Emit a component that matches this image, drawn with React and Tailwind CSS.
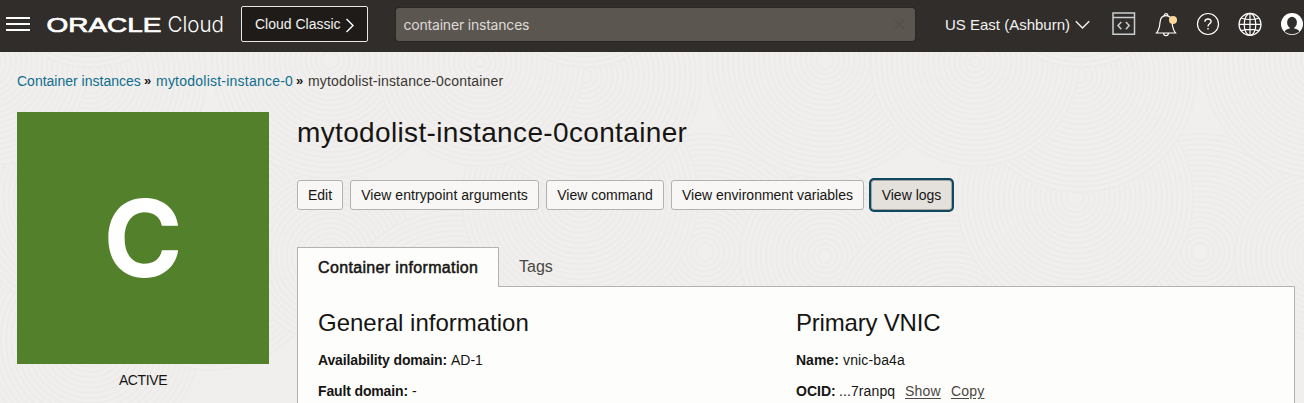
/* One motif of the background texture, painted back to front: [cx, cy, radius]. */
const rings = [
  [950, 330, 120], [1080, 340, 110], [1200, 252, 118], [1320, 256, 85], [1075, 198, 118],
  [1320, 60, 118], [1080, 76, 116], [975, 62, 104], [1080, -35, 102], [1200, -50, 80],
];

function Texture() {
  return (
    <svg className="absolute inset-0" width="1304" height="351" viewBox="0 52 1304 351" fill="#f0efed" stroke="#ecebe9" strokeWidth="1.7" aria-hidden="true">
      {[-1485, -990, -495, 0].map((dx) =>
        rings.map(([x, y, r]) => (
          <g key={`${dx}-${x}-${y}`}>
            {Array.from({ length: Math.floor(r / 5.2) }, (_, k) => (
              <circle key={k} cx={x + dx} cy={y} r={r - k * 5.2} />
            ))}
          </g>
        ))
      )}
    </svg>
  );
}

function Header() {
  return (
    <header className="flex h-[52px] shrink-0 items-start bg-[#312d2a] text-[#f4f3f2]">
      <svg className="ml-[6px] mt-[16px] shrink-0" width="24" height="16" stroke="#fff" strokeWidth="2">
        <path d="M0 2h24M0 8h24M0 14h24" />
      </svg>
      <svg className="ml-[17px] mt-[12px] shrink-0 overflow-visible" width="176" height="24" fill="#fff">
        <text x="-0.5" y="19.6" fontSize="20.5" stroke="#fff" strokeWidth="0.7" fontFamily="'Liberation Sans', Arial, sans-serif" textLength="115" lengthAdjust="spacingAndGlyphs">ORACLE</text>
        <text x="120.5" y="19.8" fontSize="22" fontWeight="300" fontFamily="Inter, sans-serif" textLength="56.5" lengthAdjust="spacingAndGlyphs">Cloud</text>
      </svg>
      <button className="ml-[18px] mt-[6px] flex h-[36px] w-[127px] shrink-0 items-center rounded-xs border border-[#e8e7e5] bg-[#1e1b18] pl-[13px] text-sm">
        <span className="w-[86px] whitespace-nowrap text-left">Cloud Classic</span>
        <svg className="ml-[4px] mt-px shrink-0" width="10" height="16" fill="none" stroke="#fff" strokeWidth="1.4"><path d="M1.5 2L8 8.5L1.5 15" /></svg>
      </button>
      <div className="ml-[28px] mt-[8px] flex h-[33px] w-[519px] shrink-0 items-center justify-between rounded-[3px] bg-[#5c5651] pl-[7.5px] pr-[10px] text-[#dedbd7] shadow-[0_0_0_1px_#2b2724]">
        <span className="mt-px font-[Inter,sans-serif] text-sm tracking-[-0.2px]">container instances</span>
        <svg width="11" height="11" stroke="#534e49" strokeWidth="1.2"><path d="M1 1L10 10M10 1L1 10" /></svg>
      </div>
      <div className="ml-[30px] mt-[14px] flex h-[22px] shrink-0 items-center">
        <span className="w-[125px] whitespace-nowrap text-[15px]">US East (Ashburn)</span>
        <svg className="ml-[5px]" width="15" height="10" fill="none" stroke="#f4f3f2" strokeWidth="1.4"><path d="M.8 1.2L7.5 8L14.2 1.2" /></svg>
      </div>
      <svg className="ml-[22px] mt-[12px] shrink-0" width="24" height="24" fill="none" stroke="#c9cfd1" strokeWidth="1.5">
        <path d="M1 .9H22.5V22.2H1ZM1 5.4H22.5" /><path d="M9.3 10L6 13.6L9.3 17.2M13.9 10L17.2 13.6L13.9 17.2" strokeWidth="1.5" />
      </svg>
      <svg className="ml-[19px] mt-[12px] shrink-0" width="24" height="25" fill="none" stroke="#fff" strokeWidth="1.2">
        <path d="M1.5 21H20.5C18.4 18.5 17.6 15.5 17 10.5C16.7 6 14.5 3.6 11 3.6S5.3 6 5 10.5C4.6 15.5 3.6 18.5 1.5 21ZM9.2 3.7A1.8 2 0 0 1 12.8 3.7M8.7 21.5A2.3 2.2 0 0 0 13.3 21.5" />
        <circle cx="18" cy="8" r="4" fill="#f9d99b" stroke="none" />
      </svg>
      <svg className="ml-[17px] mt-[12px] shrink-0" width="24" height="24" fill="none" stroke="#fff" strokeWidth="1.2">
        <circle cx="12" cy="12" r="10.5" /><path d="M8.9 9.8C8.9 6 15.1 6.1 15.1 9.6C15.1 11.8 12 11.8 12 14.4M12 16V17.6" strokeWidth="1.4" />
      </svg>
      <svg className="ml-[18px] mt-[12px] shrink-0" width="24" height="24" fill="none" stroke="#fff" strokeWidth="1.2">
        <circle cx="12" cy="12.4" r="11" /><ellipse cx="12" cy="12.4" rx="5.8" ry="11" /><path d="M12 1.4V23.4M1 12.4H23M3.4 6.2Q12 8.8 20.6 6.2M3.4 18.6Q12 16 20.6 18.6" />
      </svg>
      <svg className="ml-[19px] mt-[13px] shrink-0" width="23" height="23">
        <circle cx="11" cy="11" r="11" fill="#fff" />
        <ellipse cx="11" cy="9.5" rx="4.9" ry="5.7" fill="#312d2a" />
        <path d="M8.7 13H13.3V15.6C16.4 16.3 17.6 17 18.4 18.8Q15 21.2 11 21.2T3.6 18.8C4.4 17 5.6 16.3 8.7 15.6Z" fill="#312d2a" />
      </svg>
    </header>
  );
}

function Action({ className, active, children }) {
  return (
    <button
      className={
        "flex h-[30px] shrink-0 items-center justify-center whitespace-nowrap rounded-[3px] border text-sm " +
        (active ? "border-[#aaa39e] bg-[#e4e1dd] shadow-[0_0_0_2px_#0b4a61] " : "border-[#b5b1ad] bg-[#f8f7f5] ") +
        className
      }
    >
      {children}
    </button>
  );
}

function Separator() {
  return <span className="ml-[3px] mr-[5px] w-[7px] text-[13px] font-bold leading-[18px]">»</span>;
}

export default function App() {
  return (
    <div className="flex h-[403px] w-[1304px] flex-col overflow-hidden whitespace-nowrap bg-[#f0efed] font-['Liberation_Sans',Arial,sans-serif] text-[#161513]">
      <Header />
      <main className="relative flex h-[351px] flex-col overflow-hidden">
        <Texture />
        <nav className="relative ml-[17px] mt-[20px] flex h-[18px] shrink-0 text-sm leading-[18px]">
          <a className="w-[124px] text-[#0f6d8e]">Container instances</a>
          <Separator />
          <a className="w-[137px] tracking-[0.23px] text-[#0f6d8e]">mytodolist-instance-0</a>
          <Separator />
          <span className="tracking-[0.18px] text-[#3a3632]">mytodolist-instance-0container</span>
        </nav>
        <div className="relative flex items-start pl-[17px] pt-[22px]">
          <aside className="flex w-[252px] shrink-0 flex-col items-center">
            <div className="flex h-[252px] w-[252px] items-center justify-center bg-[#53802a] font-[Inter,sans-serif] text-[107px] font-bold leading-none text-white">
              C
            </div>
            <span className="mt-[7px] text-sm leading-[18px] tracking-[-0.4px]">ACTIVE</span>
          </aside>
          <section className="ml-[28px] w-[998px]">
            <h1 className="h-[36px] pt-[3px] text-[28px] leading-[36px] tracking-[0.35px]">mytodolist-instance-0container</h1>
            <div className="mt-[32px] flex gap-[7px]">
              <Action className="w-[46px]">Edit</Action>
              <Action className="w-[189px] tracking-[0.05px]">View entrypoint arguments</Action>
              <Action className="w-[118px]">View command</Action>
              <Action className="w-[193px]">View environment variables</Action>
              <Action className="w-[81px]" active>View logs</Action>
            </div>
            <div className="mt-[37px] flex h-[40px]">
              <div className="h-[40px] w-[202px] shrink-0 border border-b-0 border-[#b5b1ad] bg-[#fdfdfb] pl-[20px] pt-[9px] text-base leading-[21px] tracking-[0.35px] [-webkit-text-stroke:0.5px_#161513]">
                Container information
              </div>
              <div className="flex-1 border-b border-[#b5b1ad] pl-[20px] pt-[9px] text-base leading-[21px] text-[#4b4743]">
                Tags
              </div>
            </div>
            <div className="grid h-[120px] grid-cols-[478px_1fr] border-x border-[#b5b1ad] bg-[#fdfdfb] pl-[20px] pt-[20px] text-sm leading-[18px]">
              <div>
                <h2 className="h-[32px] text-2xl leading-[32px]">General information</h2>
                <p className="mt-[12px] flex gap-[4px]">
                  <b className="w-[129px] tracking-[-0.14px]">Availability domain:</b>
                  <span>AD-1</span>
                </p>
                <p className="mt-[13px] flex gap-[4px]">
                  <b className="w-[90px] tracking-[-0.14px]">Fault domain:</b>
                  <span>-</span>
                </p>
              </div>
              <div>
                <h2 className="h-[32px] text-2xl leading-[32px] tracking-[-0.2px]">Primary VNIC</h2>
                <p className="mt-[12px] flex gap-[4px]">
                  <b className="w-[43px]">Name:</b>
                  <span className="tracking-[0.14px]">vnic-ba4a</span>
                </p>
                <p className="mt-[13px] flex">
                  <b className="w-[39px]">OCID:</b>
                  <span className="ml-[4px] w-[57px] tracking-[0.1px]">...7ranpq</span>
                  <a className="ml-[9px] w-[36px] tracking-[0.2px] text-[#4b4743] underline underline-offset-2">Show</a>
                  <a className="ml-[10px] tracking-[0.2px] text-[#4b4743] underline underline-offset-2">Copy</a>
                </p>
              </div>
            </div>
          </section>
        </div>
      </main>
    </div>
  );
}
